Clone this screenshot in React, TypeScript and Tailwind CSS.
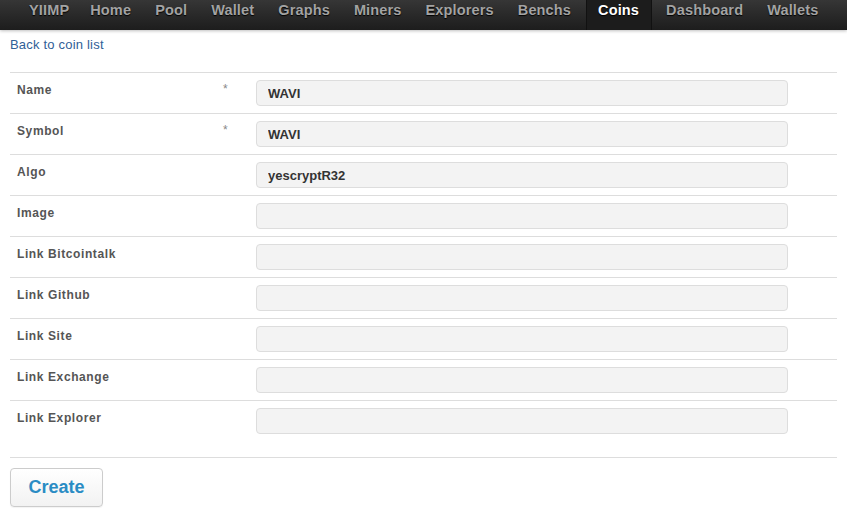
const menu = [
  "YIIMP",
  "Home",
  "Pool",
  "Wallet",
  "Graphs",
  "Miners",
  "Explorers",
  "Benchs",
  "Coins",
  "Dashboard",
  "Wallets",
];

const fields = [
  { label: "Name", required: true, value: "WAVI" },
  { label: "Symbol", required: true, value: "WAVI" },
  { label: "Algo", required: false, value: "yescryptR32" },
  { label: "Image", required: false, value: "" },
  { label: "Link Bitcointalk", required: false, value: "" },
  { label: "Link Github", required: false, value: "" },
  { label: "Link Site", required: false, value: "" },
  { label: "Link Exchange", required: false, value: "" },
  { label: "Link Explorer", required: false, value: "" },
];

export default function App() {
  return (
    <div className="min-h-[516px] bg-white font-['Liberation_Sans',Arial,sans-serif]">
      {/* Top menu */}
      <div className="h-[30px] bg-gradient-to-b from-[#363636] to-[#1d1d1d] shadow-[0_1px_3px_rgba(0,0,0,0.25)] flex items-stretch pl-[17px] whitespace-nowrap overflow-hidden">
        {menu.map((m, i) =>
          m === "Coins" ? (
            <span
              key={m}
              className="pt-[1px] pl-[11px] pr-[12px] ml-[3px] mr-[2px] -mb-px bg-[#1c1c1c] border-x border-[#111] text-white text-[14.5px] leading-[18px] font-bold tracking-[0.15px] [text-shadow:0_1px_1px_#000]"
            >
              {m}
            </span>
          ) : (
            <span
              key={m}
              className={`pt-[1px] pl-[12px] ${
                i === 0 ? "pr-[9px]" : "pr-[12px]"
              } text-[#a3a3a3] text-[14.5px] leading-[18px] font-bold tracking-[0.15px] [text-shadow:0_1px_1px_#000]`}
            >
              {m}
            </span>
          )
        )}
      </div>

      <div className="px-[10px]">
        <a
          href="#"
          className="block mt-[7px] text-[13px] leading-[16px] text-[#2f6097] tracking-[0.2px]"
        >
          Back to coin list
        </a>

        <div className="mt-[19px] border-b border-[#dddddd]">
          {fields.map((f, i) => (
            <div
              key={f.label}
              className={`flex border-t border-[#dddddd] pt-[7px] ${
                i === fields.length - 1 ? "pb-[23px]" : "pb-[7px]"
              }`}
            >
              <div className="w-[205px] pl-[7px] pt-[2px] text-[12px] leading-[16px] font-bold text-[#555] tracking-[0.6px]">
                {f.label}
              </div>
              <div className="w-[41px] pl-[8px] pt-[3px] text-[12px] leading-[12px] text-[#888]">
                {f.required ? "*" : ""}
              </div>
              <input
                readOnly
                value={f.value}
                className="w-[532px] h-[26px] rounded-[4px] border border-[#dddddd] bg-[#f3f3f3] px-[11px] text-[13px] font-bold text-[#333] outline-none"
              />
            </div>
          ))}
        </div>

        <button className="mt-[10px] w-[93px] h-[39px] rounded-[4px] border border-[#cccccc] bg-gradient-to-b from-white to-[#f2f2f2] text-[18px] font-bold text-[#2a8cc4] shadow-[0_1px_1px_rgba(0,0,0,0.05)]">
          Create
        </button>
      </div>
    </div>
  );
}
